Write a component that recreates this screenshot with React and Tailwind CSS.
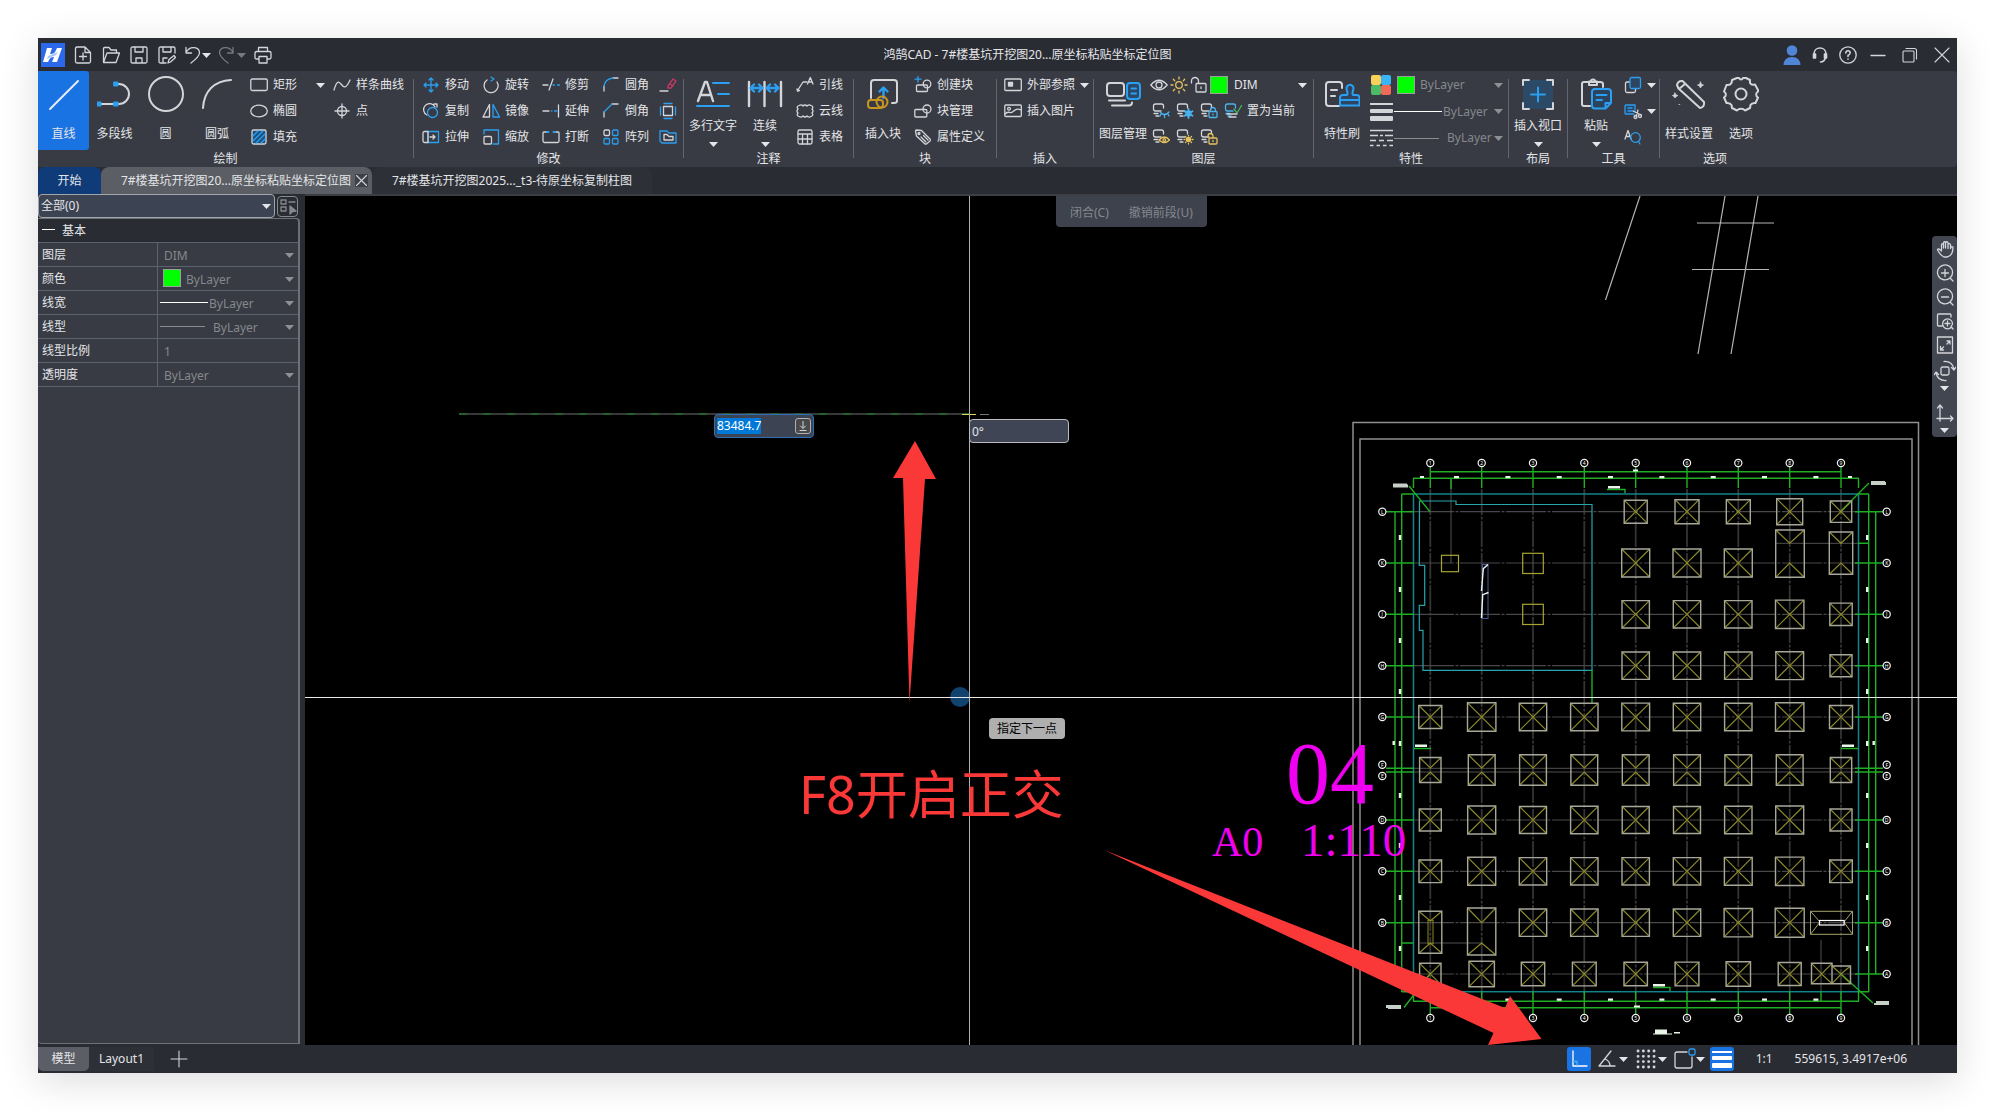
import React, { useEffect, useRef } from "react";

const W = "#d3d5d9";
const B = "#2b9ff2";
const S = "#4ab4ee";
const Y = "#e6c35c";

const Svg = ({ s = 18, vb = 18, w = 1.3, children, c = W }) => (
  <svg
    width={s}
    height={s}
    viewBox={`0 0 ${vb} ${vb}`}
    fill="none"
    stroke={c}
    strokeWidth={w}
    strokeLinecap="round"
    strokeLinejoin="round"
    className="shrink-0"
    aria-hidden="true"
  >
    {children}
  </svg>
);

const Caret = ({ color = "#e4e5e8" }) => (
  <svg width="9" height="5" viewBox="0 0 9 5" className="shrink-0" aria-hidden="true">
    <path d="M0 0H9L4.5 5Z" fill={color} />
  </svg>
);

/* ---------- large ribbon icons, 36 x 36 ---------- */
const Big = ({ children }) => (
  <Svg s={36} vb={36} w={2}>
    {children}
  </Svg>
);
const big = {
  line: <Big><path d="M4 33L32 5" stroke="#e8edf5" /></Big>,
  polyline: (
    <Big>
      <path d="M2 28H22A10 10 0 0 0 22 8H19" />
      <g fill={B} stroke={B} strokeWidth="1">
        <rect x="0" y="26" width="4" height="4" /><rect x="17" y="26" width="4" height="4" /><rect x="17" y="6" width="4" height="4" />
      </g>
    </Big>
  ),
  circle: <Big><circle cx="18" cy="18" r="17" /></Big>,
  arc: <Big><path d="M4 32C5 15 15 5 32 4" /></Big>,
  mtext: (
    <Big>
      <path d="M3 25L10 6H12L18 25M5.5 19H16" strokeWidth="2.4" />
      <path d="M18 7H34M23 18H34M2 30H34" stroke={B} />
    </Big>
  ),
  dim: (
    <Big>
      <path d="M2 6V30M17.500 6V30M34 6V30" strokeWidth="2.400" />
      <path d="M4 12H15M7 8.500L3.500 12L7 15.500M12 8.500L15.500 12L12 15.500M20 12H31M23 8.500L19.500 12L23 15.500M28 8.500L31.500 12L28 15.500" stroke={B} strokeWidth="2.400" />
    </Big>
  ),
  block: (
    <Big>
      <path d="M6 22V7Q6 4 9 4H29Q32 4 32 7V25Q32 27 29 27H27" />
      <path d="M18.500 22V12M14.500 15.500L18.500 11.500L22.500 15.500" stroke={B} strokeWidth="2.4" />
      <g stroke="#c8961f"><circle cx="17" cy="26" r="5.500" /><rect x="3" y="24" width="15" height="8" rx="3" /></g>
    </Big>
  ),
  layers: (
    <Big>
      <rect x="2" y="7" width="17" height="13" rx="3" />
      <path d="M4 24.500H20M7 29.500H24Q27 29.500 27 26.500" />
      <rect x="22" y="7" width="13" height="16" rx="3" stroke={B} fill="#2a4a6b" />
      <path d="M26.500 12.500H31M26.500 17.500H31" stroke={B} />
    </Big>
  ),
  match: (
    <Big>
      <path d="M15 30H5Q2 30 2 27V9Q2 6 5 6H15Q18 6 18 9V12M7 14H13M7 20H11" />
      <path d="M16 29.500V22Q16 19 19 19H23C25 16 21 13 23 10.500Q26 7 29 10.500C31 13 27 16 29 19H33Q35.500 19 35.500 22V29.500ZM16 24H35" stroke={B} fill="#2d4560" />
    </Big>
  ),
  viewport: (
    <Big>
      <rect x="3" y="4" width="30" height="29" fill="#2c4a66" stroke="none" />
      <path d="M3 9V4H9M27 4H33V9M33 27V33H27M9 33H3V27" />
      <path d="M18 11.500V25.500M11 18.500H25" stroke={B} />
    </Big>
  ),
  paste: (
    <Big>
      <path d="M12 30H6Q4 30 4 28V8Q4 6 6 6H22Q25 6 25 8V11" />
      <path d="M11 9V5.500H13A2 2 0 0 1 17 5.500H19V9Z" />
      <path d="M14 16Q14 13 17 13H30Q33 13 33 16V27L27.500 32.500H17Q14 32.500 14 29.500ZM27.500 32V27H33M18.500 19H28.500M18.500 24H24" stroke={B} fill="#2b435d" />
    </Big>
  ),
  wand: (
    <Big>
      <path d="M6 9Q7 4.500 11.500 5L33 26Q34 31 29 32L7.500 12.500ZM8 13L14 8" />
      <path d="M29.500 6L30.500 8.500L32.500 9L30.500 10L29.500 12L28.500 10L26.500 9L28.500 8.500ZM4 17L5 19L7 19.500L5 20.500L4 22L3 20.500L1.500 19.500L3 19ZM8 28.500H8.800" fill={W} strokeWidth="0.8" />
    </Big>
  ),
  gear: (
    <Big>
      <path d="M14 2H16C17 4 19 4 20 2H23L27 4V7Q28.500 9.500 32 8.500L35 14V15.500C32.500 17 32.500 20 35 21.500L32.500 27Q29 26.500 27.500 29L27 32L22 34.500C20 32 16 32 14 34.500L9 32L8.500 29Q7 26.500 3.500 27L1 21.500C3.500 20 3.500 17 1 15.500L3.500 9Q7 9.500 8.500 7L9 4Z" />
      <circle cx="18" cy="18" r="5.500" />
    </Big>
  ),
};

/* ---------- small ribbon icons, 18 x 18 ---------- */
const Layer = ({ c = W }) => <path d="M9 9H3.500Q1.500 9 1.500 7V4Q1.500 2 3.500 2H9.500Q11.500 2 11.500 4V6M2 11.500H6M4 14H7" stroke={c} />;
const sm = {
  rect: <Svg><rect x="0.800" y="3" width="16.500" height="11.500" rx="1.500" /></Svg>,
  ellipse: <Svg><ellipse cx="9" cy="9" rx="8.300" ry="5.800" /></Svg>,
  hatch: <Svg><rect x="2" y="2" width="14" height="14" rx="1.500" fill="#1d4f7c" /><path d="M3 8L8 3M3 13L13 3M6 15L15 6M11 15L15 11" stroke={B} /></Svg>,
  spline: <Svg><path d="M1 14C3 7 5 4 8 8S13 13 17 4" /></Svg>,
  point: <Svg><circle cx="9" cy="9" r="4.500" /><path d="M9 2V16M2 9H16" /></Svg>,
  move: <Svg><path d="M2 9H16M9 2V16M4 7L2 9L4 11M14 7L16 9L14 11M7 4L9 2L11 4M7 14L9 16L11 14" stroke={B} /></Svg>,
  rotate: <Svg><path d="M5 4A7 7 0 1 0 15 6" /><path d="M9 1L12 3L9 5" stroke={B} /></Svg>,
  trim: <Svg><path d="M1 9H6M7 14L11 3" /><path d="M11 9H12.500M15.500 9H17.500" stroke={B} /></Svg>,
  fillet: <Svg><path d="M2 15V10M11 2H16" /><path d="M2 10Q3 3 11 2" stroke={B} /></Svg>,
  erase: <Svg><path d="M1 15H9" /><path d="M9 10L14 3L17 5L12 12L9 12Z" stroke="#c03a63" /><path d="M11 8L14 10" stroke="#c03a63" /></Svg>,
  copy: <Svg><path d="M13 5A6 6 0 1 0 5 13M12 2H15V5" /><circle cx="10.500" cy="10.500" r="5" stroke={B} /></Svg>,
  mirror: <Svg><path d="M7.500 2.500V15H1Z" /><path d="M11 2.500V15H17.500Z" stroke={B} /></Svg>,
  extend: <Svg><path d="M1 9H7M16.500 3V15" /><path d="M9.500 9H10M12.500 9H15" stroke={B} /></Svg>,
  chamfer: <Svg><path d="M2 15V10M10 2H16" /><path d="M2 10L10 2" stroke={B} /></Svg>,
  offset: <Svg><rect x="4.500" y="4.500" width="9" height="9" /><path d="M5 1.500H13M5 16.500H13M1.500 5V13M16.500 5V13" stroke={B} /></Svg>,
  stretch: <Svg><path d="M6 3.500H16.500V14.500H6Z" stroke={B} /><path d="M6 3.500H2.500Q1 3.500 1 5V13Q1 14.500 2.500 14.500H6V3.500M8 9H13M11 7L13 9L11 11" /></Svg>,
  scale: <Svg><rect x="2" y="8.500" width="7.500" height="7.500" rx="1" /><path d="M2 6V2H16.500V16H11" stroke={B} /></Svg>,
  brk: <Svg><path d="M5 4H2Q1 4 1 5V13Q1 14.500 2.500 14.500H15.500Q17 14.500 17 13V5Q17 4 16 4H14" /><path d="M5 4H6.500M11.500 4H13" stroke={B} strokeWidth="2" /></Svg>,
  array: <Svg><rect x="2" y="2" width="5.500" height="5.500" rx="1.200" /><g stroke={B}><rect x="10.500" y="2" width="5.500" height="5.500" rx="1.200" /><rect x="2" y="10.500" width="5.500" height="5.500" rx="1.200" /><rect x="10.500" y="10.500" width="5.500" height="5.500" rx="1.200" /></g></Svg>,
  region: <Svg><path d="M1 3H8L10 5H17V15H3L1 13Z" stroke={B} /><path d="M5 6.500H8L10 8.500H14V12H5Z" /></Svg>,
  leader: <Svg><path d="M1.500 14.500L7 6H11M1 13L1.500 15L3.500 14.500" /><path d="M11.500 8L14.300 1.500L17 8M12.500 6H16" /></Svg>,
  cloud: <Svg><path d="M3 3.500Q5.500 2 7 4Q9 2 11 4Q13 2 15 3.500Q18 4.500 16 7Q18 9 16 11Q18 13.500 15 14.500Q13 16 11 14Q9 16 7 14Q5 16 3 14.500Q0 13.500 2 11Q0 9 2 7Q0 4.500 3 3.500Z" /></Svg>,
  table: <Svg><rect x="2" y="2" width="14" height="14" rx="1.500" /><path d="M2 6H16M2 11H16M6.500 6V16M11.500 6V16" /></Svg>,
  create: <Svg><path d="M4 0.500V6M1 3.200H7" stroke={B} /><rect x="2.500" y="9" width="11" height="6.500" rx="1" /><circle cx="13" cy="8" r="3.800" /></Svg>,
  manage: <Svg><rect x="0.800" y="7.500" width="12" height="7.500" rx="1" /><circle cx="13" cy="7" r="4" /></Svg>,
  attr: <Svg><path d="M1.500 3Q1.500 2 2.500 2L7.500 2.500L16 11Q17 12 16 13L12.500 16Q11.500 16.500 10.500 15.500L2.500 8Z" /><circle cx="5" cy="5.500" r="1" /><path d="M7 9L12 14M9.500 7.500L14 12" /></Svg>,
  xref: <Svg><rect x="0.800" y="3" width="16.500" height="11.500" rx="1" /><rect x="4.500" y="6.500" width="4" height="3.500" fill={W} /></Svg>,
  image: <Svg><rect x="0.800" y="3" width="16.500" height="11.500" rx="1" /><path d="M1 12C4 8 6 12 8.500 10S13 6 17 8" /><circle cx="5" cy="6.800" r="1.400" /></Svg>,
  eye: <Svg><path d="M0.800 9Q9 -0.500 17.200 9Q9 18.500 0.800 9Z" /><circle cx="9" cy="9" r="3" /></Svg>,
  sun: <Svg c={Y}><circle cx="9" cy="9" r="3.300" /><path d="M9 1V3M9 15V17M1 9H3M15 9H17M3.300 3.300L4.700 4.700M13.300 13.300L14.700 14.700M3.300 14.700L4.700 13.300M13.300 4.700L14.700 3.300" /></Svg>,
  unlock: <Svg><rect x="6" y="7.500" width="10" height="8.500" rx="1" /><path d="M8.500 7V5A3.500 3.500 0 0 0 1.500 5V7M11 11V12.500" /></Svg>,
  layHide: <Svg><Layer /><path d="M8 10Q12.500 15 17 10M9 12L8 14M12.500 13V15.500M16 12L17 14" stroke={S} /></Svg>,
  layFreeze: <Svg><Layer /><path d="M12.500 7V16M8.500 9.300L16.500 13.700M8.500 13.700L16.500 9.300" stroke={S} strokeWidth="1.800" /><circle cx="12.500" cy="11.500" r="2.500" stroke={S} /></Svg>,
  layLock: <Svg><Layer /><rect x="9" y="9.500" width="8" height="6" rx="1" stroke={S} /><path d="M10.500 9V8A2.500 2.500 0 0 1 15.500 8V9M13 12V13" stroke={S} /></Svg>,
  layCur: <Svg><Layer c={S} /><path d="M10 7L13 11L17.500 3.500" stroke="#46b35e" /><path d="M3 12H13M5 15H12" /></Svg>,
  layShow: <Svg><Layer /><path d="M7 12Q12.500 6 17.500 12Q12.500 17 7 12Z" stroke={Y} fill="#383b43" /><circle cx="12.300" cy="12" r="1.300" stroke={Y} /></Svg>,
  layThaw: <Svg><Layer /><circle cx="12.500" cy="11.500" r="2" stroke={Y} fill={Y} /><path d="M12.500 7.500V8M12.500 15.500V16M8 11.500H9M16 11.500H17M9.500 8.500L10 9M15 14L15.500 14.500M9.500 14.500L10 14M15 9L15.500 8.500" stroke={Y} /></Svg>,
  layUnlock: <Svg><Layer /><rect x="9" y="10" width="8" height="6" rx="1" stroke={Y} /><path d="M13 9.500V8A2.500 2.500 0 0 0 8 8V9M13 12.500V13.500" stroke={Y} /></Svg>,
  clip: <Svg><path d="M6 6H3Q1.500 6 1.500 7.500V15Q1.500 16.500 3 16.500H10Q11.500 16.500 11.500 15V13" /><rect x="6" y="1.500" width="10.500" height="11" rx="1.500" stroke={B} fill="#2c4560" /></Svg>,
  cut: <Svg><path d="M10 12H2Q1 12 1 11V4Q1 3 2 3H11V9M4 6H8M4 9H8" stroke={B} fill="#2c4560" /><path d="M9 9L17 13M12 15L14 8" /><circle cx="11.500" cy="15" r="1.500" /><circle cx="16" cy="14" r="1.500" /></Svg>,
  find: <Svg><path d="M1 11L4 2.500L7 11M2 8.500H6" /><circle cx="11.500" cy="9.500" r="4.800" stroke={B} /><path d="M14.500 13.500L16 16" stroke={B} /></Svg>,
};

const BigBtn = ({ icon, label, w, caret, active }) => (
  <button
    type="button"
    className={`flex h-[79px] flex-col items-center pt-[5px] ${w} ${active ? "rounded-r-[3px] bg-[#1a73e2]" : ""}`}
  >
    {big[icon]}
    <span className={`leading-4 whitespace-nowrap ${caret ? "mt-1.5 mb-2" : "mt-3.5"}`}>{label}</span>
    {caret && <Caret />}
  </button>
);

const Sm = ({ icon, label, caret }) => (
  <button type="button" aria-label={label || icon} className="flex h-[26px] items-center gap-[5px] whitespace-nowrap">
    {sm[icon]}
    {label && <span className="leading-4">{label}</span>}
    {caret && <Caret />}
  </button>
);

const Col = ({ items, className = "" }) => (
  <div className={`flex flex-col items-start pt-px ${className}`}>
    {items.map(([icon, label, caret]) => (
      <Sm key={icon} icon={icon} label={label} caret={caret} />
    ))}
  </div>
);

const Group = ({ title, w, children }) => (
  <section className={`flex shrink-0 flex-col ${w}`} aria-label={title}>
    <div className="flex h-20 items-start">{children}</div>
    <h2 className="text-center leading-4">{title}</h2>
  </section>
);
const Sep = () => <div className="mt-2 mb-[9px] w-px shrink-0 bg-[#62656c]" />;

const Drop = ({ id, label, value, className = "", tone = "text-[#85888d]", caret = "#8d9095" }) => (
  <div className="grid min-w-0 flex-1 items-center">
    <select
      id={id}
      aria-label={label}
      defaultValue={value}
      className={`col-start-1 row-start-1 w-full appearance-none bg-transparent leading-5 outline-none ${tone} ${className}`}
    >
      <option>{value}</option>
    </select>
    <span className="pointer-events-none col-start-1 row-start-1 justify-self-end">
      <Caret color={caret} />
    </span>
  </div>
);

const Swatch = () => <span className="size-[18px] shrink-0 border border-[#9aa09a] bg-[#00ff00]" />;

const Ribbon = () => (
  <div className="flex h-24 shrink-0 overflow-hidden rounded-r bg-[#383b43]">
    <Group title="绘制" w="w-[375px]">
      <BigBtn icon="line" label="直线" w="w-[51px]" active />
      <BigBtn icon="polyline" label="多段线" w="w-[51px]" />
      <BigBtn icon="circle" label="圆" w="w-[51px]" />
      <BigBtn icon="arc" label="圆弧" w="w-[52px]" />
      <Col className="ml-[7px]" items={[["rect", "矩形"], ["ellipse", "椭圆"], ["hatch", "填充"]]} />
      <button type="button" aria-label="更多矩形" className="ml-[19px] flex h-7 items-center">
        <Caret />
      </button>
      <Col className="ml-2" items={[["spline", "样条曲线"], ["point", "点"]]} />
    </Group>
    <Sep />
    <Group title="修改" w="w-[269px]">
      <Col className="ml-2 w-[60px]" items={[["move", "移动"], ["copy", "复制"], ["stretch", "拉伸"]]} />
      <Col className="w-[60px]" items={[["rotate", "旋转"], ["mirror", "镜像"], ["scale", "缩放"]]} />
      <Col className="w-[60px]" items={[["trim", "修剪"], ["extend", "延伸"], ["brk", "打断"]]} />
      <Col className="w-[57px]" items={[["fillet", "圆角"], ["chamfer", "倒角"], ["array", "阵列"]]} />
      <Col items={[["erase"], ["offset"], ["region"]]} />
    </Group>
    <Sep />
    <Group title="注释" w="w-[169px]">
      <BigBtn icon="mtext" label="多行文字" w="w-[58px]" caret />
      <BigBtn icon="dim" label="连续" w="w-[46px]" caret />
      <Col className="ml-2" items={[["leader", "引线"], ["cloud", "云线"], ["table", "表格"]]} />
    </Group>
    <Sep />
    <Group title="块" w="w-[142px]">
      <BigBtn icon="block" label="插入块" w="w-[58px]" />
      <Col className="ml-0.5" items={[["create", "创建块"], ["manage", "块管理"], ["attr", "属性定义"]]} />
    </Group>
    <Sep />
    <Group title="插入" w="w-24">
      <Col className="ml-[7px]" items={[["xref", "外部参照", true], ["image", "插入图片"]]} />
    </Group>
    <Sep />
    <Group title="图层" w="w-[219px]">
      <BigBtn icon="layers" label="图层管理" w="w-[58px]" />
      <div className="flex min-w-0 flex-1 flex-col pt-px pr-1.5">
        <div className="-ml-0.5 flex h-[26px] items-center gap-0.5">
          <Sm icon="eye" />
          <Sm icon="sun" />
          <Sm icon="unlock" />
          <Swatch />
          <Drop label="图层" value="DIM" tone="text-[#e4e5e8]" caret="#e4e5e8" className="pl-1" />
        </div>
        <div className="flex gap-1.5">
          <Sm icon="layHide" />
          <Sm icon="layFreeze" />
          <Sm icon="layLock" />
          <Sm icon="layCur" label="置为当前" />
        </div>
        <div className="flex gap-1.5">
          <Sm icon="layShow" />
          <Sm icon="layThaw" />
          <Sm icon="layUnlock" />
        </div>
      </div>
    </Group>
    <Sep />
    <Group title="特性" w="w-[194px]">
      <BigBtn icon="match" label="特性刷" w="w-14" />
      <div className="flex min-w-0 flex-1 flex-col pt-px pr-[5px]">
        <div className="flex h-[26px] items-center">
          <svg width="22" height="20" viewBox="0 0 22 20" aria-hidden="true" className="mr-[5px] shrink-0">
            <rect x="1" width="10" height="10" rx="2" fill="#f8d05a" />
            <rect x="11" width="10" height="10" rx="2" fill="#38b6f5" />
            <rect x="1" y="10" width="10" height="10" rx="2" fill="#4cba67" />
            <rect x="11" y="10" width="10" height="10" rx="2" fill="#ef6b57" />
          </svg>
          <Swatch />
          <Drop label="颜色" value="ByLayer" className="pl-[5px]" />
        </div>
        <div className="flex h-[27px] items-center">
          <svg width="23" height="18" viewBox="0 0 23 18" aria-hidden="true" className="shrink-0">
            <rect width="23" height="2" fill={W} />
            <rect y="6" width="23" height="4" rx="1" fill={W} />
            <rect y="13" width="23" height="5" rx="1" fill={W} />
          </svg>
          <span className="ml-px h-px w-12 shrink-0 bg-white" />
          <Drop label="线宽" value="ByLayer" className="pl-px" />
        </div>
        <div className="flex h-[26px] items-center">
          <svg width="23" height="18" viewBox="0 0 23 18" aria-hidden="true" className="shrink-0" stroke={W} strokeWidth="1.500">
            <path d="M0 1.500H23" />
            <path d="M0 6.500H8M10 6.500H13M15 6.500H23" />
            <path d="M0 11.500H6M9 11.500H14M17 11.500H23" />
            <path d="M0 16.500H23" strokeDasharray="3.500 3" />
          </svg>
          <span className="ml-px h-px w-[45px] shrink-0 bg-[#8a8d92]" />
          <Drop label="线型" value="ByLayer" className="pl-2" />
        </div>
      </div>
    </Group>
    <Sep />
    <Group title="布局" w="w-[58px]">
      <BigBtn icon="viewport" label="插入视口" w="w-[58px]" caret />
    </Group>
    <Sep />
    <Group title="工具" w="w-[91px]">
      <BigBtn icon="paste" label="粘贴" w="w-14" caret />
      <div className="flex flex-col items-start pt-px">
        <Sm icon="clip" caret />
        <Sm icon="cut" caret />
        <Sm icon="find" />
      </div>
    </Group>
    <Sep />
    <Group title="选项" w="w-[110px]">
      <BigBtn icon="wand" label="样式设置" w="w-[58px]" />
      <BigBtn icon="gear" label="选项" w="w-[46px]" />
    </Group>
  </div>
);

const IconBtn = ({ label, className = "", children }) => (
  <button type="button" aria-label={label} className={`flex shrink-0 items-center justify-center ${className}`}>
    {children}
  </button>
);

const TitleBar = () => (
  <header className="flex h-[33px] shrink-0 items-center pt-px pr-1.5">
    <svg width="24" height="24" viewBox="0 0 24 24" className="ml-[3px] shrink-0" role="img" aria-label="鸿鹄CAD">
      <rect width="24" height="24" fill="#2b68ea" />
      <path d="M6 5H11L9 11C12 11 14 10 15 7L16 5H21L16 19H11L13 14C10 14 9 15 8 17L7 19H2Z" fill="#fff" />
      <path d="M7 13L17 9L15 12L6 16Z" fill="#a9c6ff" />
    </svg>
    <div className="ml-[9px] flex items-center gap-2.5">
      <IconBtn label="新建"><Svg><path d="M11 1H3Q1.500 1 1.500 2.500V15.500Q1.500 17 3 17H15Q16.500 17 16.500 15.500V6.500ZM11 1V6.500H16.500M9 7V14M5.500 10.500H12.500" /></Svg></IconBtn>
      <IconBtn label="打开"><Svg><path d="M1.500 16V2.500Q1.500 1.500 2.500 1.500H7L9 4H14.500V7M1.500 16.500L5 7H17.500L14 16.500Z" /></Svg></IconBtn>
      <IconBtn label="保存"><Svg><path d="M2.500 1H15.500Q17 1 17 2.500V15.500Q17 17 15.500 17H2.500Q1 17 1 15.500V2.500Q1 1 2.500 1ZM5 1V6H13V1M6 17V12H12V17" /></Svg></IconBtn>
      <IconBtn label="另存为"><Svg><path d="M8 17H2.500Q1 17 1 15.500V2.500Q1 1 2.500 1H15.500Q17 1 17 2.500V7M5 1V6H13V1M5 17V12H9M10 17L11 13.500L16 9.500L17.500 11.500L12.500 16Z" /></Svg></IconBtn>
    </div>
    <IconBtn label="撤销" className="ml-2"><Svg><path d="M2 1.500V7H7.500M2 6.500C6 -1 15.500 1 15.500 7Q15 11 7 17" /></Svg><Caret /></IconBtn>
    <IconBtn label="重做" className="ml-1.5 gap-0.5"><Svg c="#777a80"><path d="M16 1.500V7H10.500M16 6.500C12 -1 2.500 1 2.500 7Q3 11 11 17" /></Svg><Caret color="#777a80" /></IconBtn>
    <IconBtn label="打印" className="ml-2"><Svg><path d="M4.500 5V1.500H13.500V5M4.500 13H2.500Q1 13 1 11.500V7Q1 5.500 2.500 5.500H15.500Q17 5.500 17 7V11.500Q17 13 15.500 13H13.500M5 10.500H13V17H5Z" /></Svg></IconBtn>
    <h1 className="min-w-0 flex-1 truncate text-center">鸿鹄CAD - 7#楼基坑开挖图20...原坐标粘贴坐标定位图</h1>
    <div className="flex items-center gap-2.5">
      <IconBtn label="账户">
        <svg width="18" height="20" viewBox="0 0 18 20" fill="#4f86d6" aria-hidden="true"><circle cx="9" cy="5.500" r="5.300" /><path d="M0.500 20Q1 12 9 12T17.500 20Z" /></svg>
      </IconBtn>
      <IconBtn label="客服"><Svg w={1.6}><path d="M3 8C3 0 15 0 15 8M14.500 12Q13 16 9.500 16" /><path d="M2.500 8V12H4.500V8ZM13.500 8V12H15.500V8Z" fill={W} /></Svg></IconBtn>
      <IconBtn label="帮助"><Svg><circle cx="9" cy="9" r="8.200" /><path d="M6.800 7Q7 4.800 9 4.800T11.200 7Q11 8.300 9 9.500V10.500M9 13V13.200" strokeWidth="1.600" /></Svg></IconBtn>
    </div>
    <div className="ml-3 flex items-center gap-3.5">
      <IconBtn label="最小化"><Svg><path d="M2 9.500H16" /></Svg></IconBtn>
      <IconBtn label="还原"><Svg w={1.1}><rect x="2" y="5" width="11" height="11" rx="1" /><path d="M5 2.500H13.500Q15.500 2.500 15.500 4.500V13" /></Svg></IconBtn>
      <IconBtn label="关闭"><Svg w={1.1}><path d="M2 2L16 16M16 2L2 16" /></Svg></IconBtn>
    </div>
  </header>
);

const Tabs = () => (
  <nav className="flex h-[27px] shrink-0 items-stretch" aria-label="图纸">
    <button type="button" className="w-[63px] rounded-t-[6px] bg-[#0f3b78]">开始</button>
    <div className="flex items-center rounded-t-[8px] bg-[#5b5e64] pr-1 pl-5">
      <button type="button">7#楼基坑开挖图20...原坐标粘贴坐标定位图</button>
      <button type="button" aria-label="关闭标签" className="ml-1 bg-[#3d4046]">
        <Svg s={13} vb={13} w={1.1}><path d="M1.500 1.500L11.500 11.500M11.500 1.500L1.500 11.500" /></Svg>
      </button>
    </div>
    <button type="button" className="rounded-t-[8px] bg-[#2d3037] px-5">7#楼基坑开挖图2025..._t3-待原坐标复制柱图</button>
  </nav>
);

const Row = ({ id, label, children }) => (
  <div className="flex h-6 items-stretch border-b border-[#5d6270]">
    <label htmlFor={id} className="flex w-[120px] shrink-0 items-center border-r border-[#5d6270] pl-1">{label}</label>
    <div className="flex min-w-0 flex-1 items-center pt-0.5 pr-1 pl-0.5">{children}</div>
  </div>
);

const Panel = () => (
  <aside className="flex w-[267px] shrink-0 flex-col pr-[5px]">
    <div className="flex h-6 items-center gap-0.5 pr-0.5">
      <div className="flex h-6 flex-1 items-center rounded border border-[#a3a6ab] bg-[#3c4352] pr-[3px] pl-0.5">
        <Drop label="选择集" value="全部(0)" tone="text-[#e4e5e8]" caret="#e4e5e8" />
      </div>
      <IconBtn label="快速选择" className="size-[21px] rounded border border-[#85888d]">
        <Svg c="#85888d"><path d="M2 3H7V7H2ZM2 10H7V14H2ZM10 5H16" /><path d="M11 9L17 14L13.500 14.500L11 17Z" fill="#85888d" /></Svg>
      </IconBtn>
    </div>
    <div className="mb-px flex flex-1 flex-col rounded-tr rounded-bl border-t border-r-2 border-b border-[#6d7078] bg-[#383b43]">
      <div className="flex h-[23px] shrink-0 items-center rounded-tr bg-[#2a2c34] pl-1">
        <span className="mb-[3px] h-px w-[13px] bg-white" />
        <h2 className="ml-[7px]">基本</h2>
      </div>
      <div className="border-t border-[#5d6270]">
        <Row id="p-layer" label="图层"><Drop id="p-layer" value="DIM" className="pl-1" /></Row>
        <Row id="p-color" label="颜色"><span className="-mt-1 ml-[3px] flex"><Swatch /></span><Drop id="p-color" value="ByLayer" className="pl-[5px]" /></Row>
        <Row id="p-weight" label="线宽"><span className="mb-0.5 h-px w-12 shrink-0 bg-white" /><Drop id="p-weight" value="ByLayer" className="pl-px" /></Row>
        <Row id="p-type" label="线型"><span className="mb-0.5 h-px w-[45px] shrink-0 bg-[#8a8d92]" /><Drop id="p-type" value="ByLayer" className="pl-2" /></Row>
        <Row id="p-scale" label="线型比例"><input id="p-scale" defaultValue="1" className="w-full bg-transparent pl-1 text-[#85888d] outline-none" /></Row>
        <Row id="p-alpha" label="透明度"><Drop id="p-alpha" value="ByLayer" className="pl-1" /></Row>
      </div>
    </div>
  </aside>
);

/* ---------- foundation plan ---------- */
const CX = [1430.3, 1481.7, 1533, 1584.3, 1635.7, 1687, 1738.3, 1789.7, 1841];
const CY = [511.7, 563, 614.3, 665.7, 717, 770, 820, 871.3, 922.7, 974];
const HALF = {
  0: [0, 0, 0, 0, 11.5, 12, 12, 13, 10.7],
  1: [0, 0, 0, 0, 14, 14, 14, 0, 0],
  2: [0, 0, 0, 0, 13.7, 13.7, 13.7, 14.2, 11.2],
  3: [0, 0, 0, 0, 13.7, 13.7, 13.7, 13.9, 11],
  4: [11.5, 14.2, 13.7, 13.7, 13.9, 13.7, 13.7, 14.2, 11.5],
  6: [11, 14, 13.5, 13.7, 13.5, 13.5, 13.7, 14, 11],
  7: [11.3, 14, 13.7, 13.7, 13.7, 13.7, 13.9, 14.2, 11.3],
  8: [0, 0, 13.7, 13.7, 13.7, 13.7, 14.2, 14.5, 0],
  9: [10.7, 12.7, 11.7, 11.9, 11.7, 11.9, 12.2, 11.5, 0],
};
const pads = [];
Object.entries(HALF).forEach(([r, hs]) =>
  hs.forEach((h, c) => {
    if (h) pads.push([CX[c] - h, CY[r] - h, CX[c] + h, CY[r] + h, CX[c], CY[r], CY[r]]);
  })
);
CX.forEach((x, c) => {
  const edge = c === 0 || c === 8;
  const hw = edge ? 10.7 : 13.4;
  const hh = edge ? 12.5 : 15.3;
  pads.push([x - hw, 770 - hh, x + hw, 770 + hh, x, 768, 772]);
});
pads.push(
  [1775.7, 530, 1804.3, 577.3, 1789.7, 543.3, 563],
  [1829.3, 532, 1852.7, 574.3, 1841, 543.3, 563],
  [1418.8, 911.3, 1441.8, 953.3, 1430.3, 921, 943],
  [1467.5, 908, 1495.8, 955, 1481.7, 922.7, 943],
  [1811.5, 963.3, 1832, 983.7, 1821.7, 974, 974],
  [1832, 966, 1850.5, 983.7, 1841, 974, 974]
);
const SIDE_Y = [511.7, 563, 614.3, 665.7, 717, 820, 871.3, 922.7, 974];
const MID_X = CX.slice(0, 8).map((x) => x + 25.7);
const MID_Y = [537, 589, 640, 691, 743, 795, 845, 897, 948];

const Bubble = ({ x, y, n }) => (
  <g>
    <circle cx={x} cy={y} r="3.600" fill="#000" stroke="#f4f4f4" strokeWidth="1.200" />
    <text x={x} y={y + 2} fontSize="5" fill="#fff" textAnchor="middle">{n}</text>
  </g>
);
const LETTERS = ["L", "K", "J", "H", "G", "D", "C", "B", "A"];

const Plan = () => (
  <g fill="none">
    <g stroke="#8f8f8f">
      <path d="M1353 1060V422.500H1918.500V1060" strokeWidth="1.500" />
      <path d="M1360 1060V439H1912V1060" strokeWidth="1.500" />
    </g>
    <path d={CX.map((x) => `M${x} 489V1000`).join("")} stroke="#343434" strokeWidth="1.800" strokeDasharray="26 1.500 3 1.500" />
    <path d={SIDE_Y.map((y) => `M1414 ${y}H1858`).join("")} stroke="#484848" strokeWidth="1.200" strokeDasharray="40 1.500 3 1.500" />
    <path d="M1414 768.300H1858M1414 772H1858M1451 480V563M1420 943H1482M1821 940V992M1775 543.300H1858" stroke="#505050" />
    <rect x="1413.500" y="494" width="445" height="497.700" stroke="#11838a" strokeWidth="1.500" />
    <path d="M1419.500 501H1456V504.500H1592V670.300H1423V630.300H1419.300V605.300H1424.700V565.300H1419.300Z" stroke="#27a5ad" strokeWidth="1.200" />
    <g stroke="#1fae24" strokeWidth="1.400">
      <path d="M1430 471.700H1841M1413 478.300H1859M1413.500 478V488M1858.500 478V488M1451 478V489M1592 670V703" />
      <path d={CX.map((x) => `M${x} 467V488M${x} 991V1014`).join("")} />
      <path d={SIDE_Y.map((y) => `M1386 ${y}H1414M1855 ${y}H1883`).join("")} />
      <path d="M1386 768.300H1414M1386 772H1414M1855 768.300H1883M1855 772H1883" />
      <path d="M1395 511.700V974M1401.700 494V992M1868.700 494V992M1875.700 511.700V974" />
      <path d="M1401.700 494H1413M1858 494H1869M1401.700 991.700H1413M1858 991.700H1869M1402 943H1413M1858 543.300H1869" />
      <path d="M1413 1001.300H1859M1430 1007.700H1841M1413.500 991V1001M1858.500 991V1001M1821 991V1001" />
      <path d="M1409 486L1430 511.700M1841 511L1869 483M1430 974L1404 1007.500M1841 974L1873 1003" />
      <path d="M1607 489.500H1625V493M1414 748.500H1431M1841 748.500H1858M1653 987.500H1670V991" />
    </g>
    <path d={pads.map(([a, b, c, d, x, y1, y2]) => `M${a} ${b}L${x} ${y1}L${c} ${b}M${a} ${d}L${x} ${y2}L${c} ${d}`).join("")} stroke="#8c8a2c" strokeWidth="1.200" />
    <path d={pads.map(([a, b, c, d]) => `M${a} ${b}H${c}V${d}H${a}Z`).join("")} stroke="#a8a89a" strokeWidth="1.400" />
    <path d="M1810.500 911.300H1852.500V934.300H1810.500ZL1820 922L1810.500 934.300M1852.500 911.300L1844 922L1852.500 934.300" stroke="#a3a36e" />
    <rect x="1819.500" y="920.500" width="24.600" height="4.500" stroke="#fff" strokeWidth="1.200" />
    <rect x="1428" y="920.300" width="5" height="23.400" stroke="#8c8a1c" />
    <g stroke="#a8a530" strokeWidth="1.200">
      <rect x="1441.500" y="555.300" width="17" height="16.400" />
      <rect x="1522.700" y="553.300" width="20.600" height="20.200" />
      <rect x="1522.700" y="604.300" width="20.600" height="20.200" />
    </g>
    <rect x="1482.500" y="564.500" width="5.500" height="54" stroke="#4a5a96" />
    <path d="M1488 564.500L1483.300 568.700L1481.500 591M1488.500 592.500L1482.700 594.700L1481.500 618" stroke="#f2f2f2" strokeWidth="1.400" />
    <g fill="#eaf5ea">
      {MID_X.map((x) => <path key={x} d={`M${x - 2} 476h5v2.200h-5zM${x - 2} 998.500h5v2.200h-5z`} />)}
      {MID_Y.map((y) => <path key={y} d={`M1398.800 ${y - 2}h2.400v5h-2.400zM1866 ${y - 2}h2.400v5h-2.400z`} />)}
      <path d="M1393 483.500h14v1h1v3h-15zM1871 481h14v1h1v3h-15zM1386 1005h15v4h-13v-1h-2zM1876 1001h13v4h-15v-2h2z" opacity="0.850" />
      <path d="M1608 486h12v2.500h-12zM1415 744.500h12v2.500h-12zM1842 744.500h12v2.500h-12zM1653 984h12v2.500h-12z" />
      <path d="M1633 469.500h5v2h-5zM1634 1005.500h6v2h-6zM1420 476h4v2h-4zM1848 476h4v2h-4z" />
      <path d="M1655 1029.500h12v4h-12zM1653 1033.500h19v1h-19zM1674 1032h6v1.500h-6z" />
      <path d="M1392.500 741h2.400v4h-2.400zM1872.500 741h2.400v4h-2.400z" />
    </g>
    {CX.map((x, i) => (
      <g key={x}><Bubble x={x} y={463} n={i + 1} /><Bubble x={x} y={1018} n={i + 1} /></g>
    ))}
    {SIDE_Y.map((y, i) => (
      <g key={y}><Bubble x={1382.3} y={y} n={LETTERS[i]} /><Bubble x={1886.7} y={y} n={LETTERS[i]} /></g>
    ))}
    {[1382.3, 1886.7].map((x) => (
      <g key={x}><Bubble x={x} y={764.7} n="F" /><Bubble x={x} y={776} n="E" /></g>
    ))}
  </g>
);

const navIcons = [
  ["平移", <path key="a" d="M5.500 10V4.500Q6.500 3 7.500 4.500V8V2.500Q8.500 1 9.500 2.500V8V2.500Q11 1 12 2.500V8.500V4Q13.500 3 14.500 4.500V8.500Q15 6 17 7Q17 16 11 17H8Q5 16 1.500 10Q2 7.500 5.500 11" />],
  ["放大", <path key="b" d="M14 14A7.500 7.500 0 1 1 16.500 9Q16.500 12 14 14L17 17M9 5.500V12.500M5.500 9H12.500" />],
  ["缩小", <path key="c" d="M14 14A7.500 7.500 0 1 1 16.500 9Q16.500 12 14 14L17 17M5.500 9H12.500" />],
  ["窗口缩放", <path key="d" d="M6 14H2.500Q1.500 14 1.500 13V3Q1.500 2 2.500 2H14Q15 2 15 3V5M15.500 15A5 5 0 1 1 16.500 11Q16.500 13.500 15 14.500L17 17M9 11.500H14M11.500 9V14" />],
  ["全部缩放", <path key="e" d="M1.500 1H16.500V17H1.500ZM11 5H14V8M14 5L11 8M4.500 10.500V14H7.500M4.500 14L7.500 11" />],
];

const Drawing = () => {
  const dist = useRef(null);
  useEffect(() => {
    dist.current.focus({ preventScroll: true });
    dist.current.select();
  }, []);
  return (
    <main className="relative min-w-0 flex-1 overflow-hidden border-t-2 border-[#3c3e44] bg-black">
      <svg viewBox="305 196 1652 849" preserveAspectRatio="xMinYMin slice" className="absolute inset-0 size-full" aria-label="图纸">
        <g stroke="#b4b4b4" strokeWidth="1.200">
          <path d="M1640 196L1605.500 300M1725 196L1698 354M1758 196L1731 354M1697 223H1774M1692 269.500H1769" />
        </g>
        <Plan />
        <g fill="#f000f0" fontFamily="Liberation Serif, serif">
          <text x="1286" y="803" fontSize="88">04</text>
          <text x="1212" y="856" fontSize="42">A0</text>
          <text x="1301" y="856" fontSize="47">1:110</text>
        </g>
        <path d="M459 414H970" stroke="#6f7270" />
        <path d="M459 414H970" stroke="#128a18" strokeDasharray="8 16" />
        <path d="M962 414.500H976" stroke="#d9d65a" />
        <path d="M980 414.500H989" stroke="#777" />
        <circle cx="960" cy="697" r="10" fill="#11436f" />
        <path d="M969.500 196V1045" stroke="#b0b0b0" />
        <path d="M305 697.500H1957" stroke="#e8e8e8" />
        <path d="M915 441L936 479H925L909.500 703L903 478H893Z" fill="#fb3838" />
        <path d="M1104 850L1505 1008L1510 996L1541.500 1039L1488 1045L1493.500 1033Z" fill="#fb3838" />
      </svg>
      <div className="absolute top-0 left-[751px] flex h-[31px] items-center gap-5 rounded-b-[4px] bg-[#3d424d] px-3.5 pt-0.5 text-[#85888d]">
        <button type="button">闭合(C)</button>
        <button type="button">撤销前段(U)</button>
      </div>
      <div className="absolute top-[218px] left-[409px] flex h-6 w-[100px] items-center rounded border border-[#2f6fb5] bg-[#3c4352] pr-0.5 pl-0.5">
        <input
          ref={dist}
          aria-label="距离"
          defaultValue="83484.7"
          className="w-0 flex-1 bg-transparent text-white outline-none selection:bg-[#0078d7] selection:text-white"
        />
        <IconBtn label="锁定" className="size-4 rounded-[3px] border border-[#b0b0b0] bg-[#4a4a4c]">
          <Svg s={12} vb={12} w={1}><path d="M6 1.500V8M3.500 6L6 8.500L8.500 6M3 10.500H9" /></Svg>
        </IconBtn>
      </div>
      <input
        aria-label="角度"
        defaultValue="0°"
        className="absolute top-[223px] left-[664px] h-6 w-[100px] rounded border border-[#b9bbbf] bg-[#3f4554] px-0.5 text-[#e4e5e8] outline-none"
      />
      <div role="tooltip" className="absolute top-[522px] left-[684px] rounded-[4px] bg-[#afafaf] px-2 py-[3px] leading-[15px] text-black">
        指定下一点
      </div>
      <p className="absolute top-[560px] left-[494px] text-[52px] leading-[76px] whitespace-nowrap text-[#fb3838]">F8开启正交</p>
      <div className="absolute top-10 right-0 flex w-[25px] flex-col items-center rounded bg-[#414651] py-1">
        {navIcons.map(([l, p]) => (
          <IconBtn key={l} label={l} className="mb-1.5"><Svg>{p}</Svg></IconBtn>
        ))}
        <IconBtn label="动态观察" className="mb-[13px] flex-col gap-1">
          <Svg s={22} vb={22}><rect x="7" y="7" width="8" height="8" rx="1.500" /><path d="M10 1.500Q18 1 20 9M17.500 7.500L20 10L22 7M12 20.500Q4 21 2 13M0 15L2 12L4.500 14.500" /></Svg>
          <Caret />
        </IconBtn>
        <IconBtn label="坐标系" className="flex-col gap-1.5">
          <Svg><path d="M4 17V1.500M1.500 4L4 1L6.500 4M1 14.500H17M14.500 12L17 14.500L14.500 17" /></Svg>
          <Caret />
        </IconBtn>
      </div>
    </main>
  );
};

const StatusBar = () => (
  <footer className="flex h-7 shrink-0 items-center">
    <button type="button" className="h-6 w-[51px] rounded-b-[5px] bg-[#5b5e66]">模型</button>
    <button type="button" className="h-6 w-[65px] bg-[#2d3037]">Layout1</button>
    <IconBtn label="新建布局" className="ml-4"><Svg w={1.1}><path d="M9 1V17M1 9H17" /></Svg></IconBtn>
    <div className="ml-auto flex items-center pr-[50px]">
      <IconBtn label="正交" className="size-6 rounded-[3px] bg-[#1a73e2]"><Svg><path d="M3 1V16H17" stroke="#fff" /><path d="M3.500 11.500H7V15" stroke={S} /></Svg></IconBtn>
      <IconBtn label="极轴" className="ml-1.5 gap-0.5"><Svg s={20} vb={20}><path d="M14 2L2 17H18M8 10Q13 12 13 17" /></Svg><Caret /></IconBtn>
      <IconBtn label="栅格" className="ml-2 gap-0.5">
        <Svg s={20} vb={20} w={2.8}><path d="M2 2h.1M7.300 2h.1M12.600 2h.1M18 2h.1M2 7.300h.1M7.300 7.300h.1M12.600 7.300h.1M18 7.300h.1M2 12.600h.1M7.300 12.600h.1M12.600 12.600h.1M18 12.600h.1M2 18h.1M7.300 18h.1M12.600 18h.1M18 18h.1" /></Svg>
        <Caret />
      </IconBtn>
      <IconBtn label="对象捕捉" className="ml-[7px]"><Svg s={22} vb={22}><path d="M13 4H3Q1 4 1 6V18Q1 20 3 20H16Q18 20 18 18V9" /><rect x="15" y="1" width="6" height="6" rx="1.500" stroke={B} /></Svg><Caret /></IconBtn>
      <IconBtn label="线宽显示" className="ml-[5px] size-6 rounded-[3px] bg-[#1a73e2]">
        <svg width="20" height="18" viewBox="0 0 20 18" fill="#fff" aria-hidden="true"><rect y="1" width="20" height="2" /><rect y="6" width="20" height="4" rx="1" /><rect y="13" width="20" height="5" rx="1" /></svg>
      </IconBtn>
      <span className="ml-[22px]">1:1</span>
      <span className="ml-[22px]">559615, 3.4917e+06</span>
    </div>
  </footer>
);

export default function App() {
  return (
    <div className="flex h-screen bg-white p-[38px] font-['Noto_Sans','Noto_Sans_CJK_SC',sans-serif] text-xs text-[#e4e5e8]">
      <div className="flex min-w-0 flex-1 flex-col overflow-hidden bg-[#2a2c34] shadow-[0_8px_36px_rgba(0,0,0,0.14)]">
        <TitleBar />
        <Ribbon />
        <Tabs />
        <div className="flex min-h-0 flex-1">
          <Panel />
          <Drawing />
        </div>
        <StatusBar />
      </div>
    </div>
  );
}
